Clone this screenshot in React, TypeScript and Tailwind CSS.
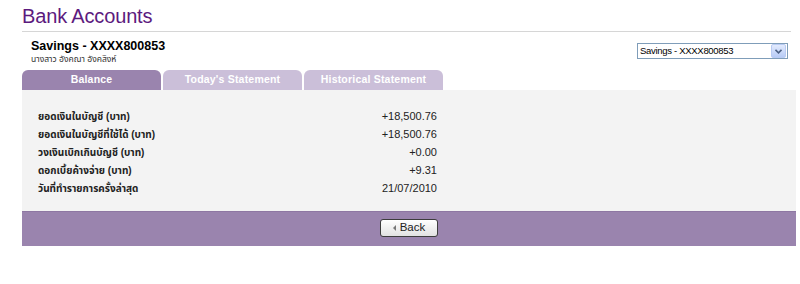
const rows = [
  { label: "ยอดเงินในบัญชี (บาท)", value: "+18,500.76" },
  { label: "ยอดเงินในบัญชีที่ใช้ได้ (บาท)", value: "+18,500.76" },
  { label: "วงเงินเบิกเกินบัญชี (บาท)", value: "+0.00" },
  { label: "ดอกเบี้ยค้างจ่าย (บาท)", value: "+9.31" },
  { label: "วันที่ทำรายการครั้งล่าสุด", value: "21/07/2010" },
];

const tabs = ["Balance", "Today's Statement", "Historical Statement"];

export default function App() {
  return (
    <div className="min-h-[284px] bg-white pl-[22px] pr-[4px] pt-[4px] font-['Liberation_Sans',Arial,'Noto_Sans_Thai','Noto_Sans',sans-serif]">
      <h1 className="text-[20px] leading-[24px] tracking-[-0.15px] text-[#5c1a7e]">Bank Accounts</h1>
      <div className="mr-[5px] mt-[3px] h-px bg-[#d6d6d6]" />

      {/* account header */}
      <div className="mt-[7px] flex h-[31px] items-start justify-between">
        <div className="pl-[9px]">
          <div className="text-[12.5px] font-bold leading-[15px] text-black">Savings - XXXX800853</div>
          <div className="text-[8.5px] leading-[10px] text-[#333]">นางสาว อังคณา อังคสิงห์</div>
        </div>
        <div className="mr-[8px] mt-[4px] flex h-[16px] w-[151px] items-center border border-[#7f9db9] bg-white">
          <span className="flex-1 pl-[2px] text-[9.5px] leading-[14px] tracking-[-0.3px] text-black">Savings - XXXX800853</span>
          <span className="mr-px flex h-[14px] w-[15px] items-center justify-center rounded-[2px] border border-[#b9cbf3] bg-gradient-to-b from-[#e3ebfd] to-[#b7cbf6]">
            <svg width="7" height="5" viewBox="0 0 7 5">
              <path d="M0.5 0.8 L3.5 3.8 L6.5 0.8" fill="none" stroke="#4d6185" strokeWidth="1.6" />
            </svg>
          </span>
        </div>
      </div>

      {/* tabs */}
      <div className="flex gap-[2px]">
        {tabs.map((t, i) => (
          <div
            key={t}
            className={
              i === 0
                ? "flex h-[20px] w-[139px] items-center justify-center rounded-t-[6px] bg-[#9a84ae] text-[10.5px] font-bold tracking-[0.2px] text-white"
                : "flex h-[20px] w-[139px] items-center justify-center rounded-t-[6px] bg-[#cbbfd9] text-[10.5px] font-bold tracking-[0.2px] text-white"
            }
          >
            {t}
          </div>
        ))}
      </div>

      {/* balance table */}
      <div className="bg-[#f3f3f3] pb-[14px] pl-[16px] pt-[17px]">
        <div className="w-[399px]">
          {rows.map((r) => (
            <div key={r.label} className="flex h-[18px] items-center justify-between">
              <span className="text-[10px] font-bold text-[#222]">{r.label}</span>
              <span className="text-[11px] text-[#222]">{r.value}</span>
            </div>
          ))}
        </div>
      </div>

      {/* footer */}
      <div className="flex h-[35px] justify-center border-t border-[#8e77a3] bg-[#9a84ae] pt-[7px]">
        <button className="flex h-[18px] w-[58px] items-center justify-center gap-[4px] rounded-[3px] border border-[#3d3d3d] bg-gradient-to-b from-white to-[#e2e2e2] text-[11.5px] text-[#222]">
          <svg width="3" height="6" viewBox="0 0 3 6">
            <path d="M3 0 L0 3 L3 6 Z" fill="#777" />
          </svg>
          Back
        </button>
      </div>
    </div>
  );
}
